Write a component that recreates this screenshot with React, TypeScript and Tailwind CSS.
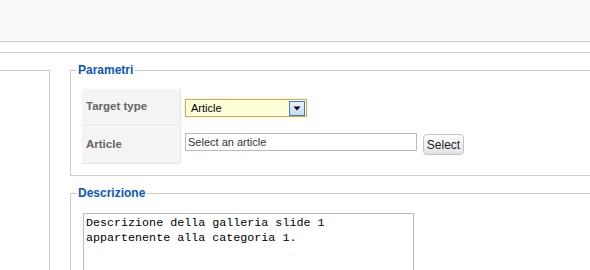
import React from "react";

export default function App() {
  return (
    <div className="w-[590px] h-[270px] overflow-hidden bg-white font-['Liberation_Sans',Arial,sans-serif]">
      <div className="h-[42px] bg-[#fafafa] border-b border-[#cccccc]" />
      <div className="h-[11px] border-b border-[#cccccc]" />
      <div className="flex items-start pt-[10px]">
        <div className="w-[50px] h-[300px] mt-[7px] border-t border-r border-[#cccccc] shrink-0" />
        <div className="ml-[20px] w-[600px] shrink-0">
          <fieldset className="border border-[#cccccc] px-[5px] pt-[11px] pb-[11px]">
            <legend className="px-[2px] h-[15px] leading-[15px] text-[12px] font-bold text-[#0b55c4]">Parametri</legend>
            <div className="ml-[6px] flex flex-col gap-[1px]">
              <div className="flex h-[37px]">
                <div className="w-[99px] h-[37px] bg-[#f4f4f4] border-b border-r border-[#e6e6e6] flex items-center pl-[4px] text-[11.5px] font-bold text-[#666666]">
                  Target type
                </div>
                <div className="pl-[4px] pt-[10px]">
                  <div className="w-[122px] h-[18px] border border-[#e5a53f] bg-[#ffffd8] shadow-[0_0_1px_#f5d48a] flex items-center justify-between">
                    <span className="pl-[5px] text-[11px] text-black leading-none">Article</span>
                    <div className="w-[16px] h-[15px] mr-[1px] border border-[#3d7bbd] bg-gradient-to-b from-[#e8f1fb] to-[#c6dcf2] flex items-center justify-center">
                      <svg width="8" height="5" viewBox="0 0 8 5">
                        <path d="M0.5 0.5 L7.5 0.5 L4 4.5 Z" fill="#000" />
                      </svg>
                    </div>
                  </div>
                </div>
              </div>
              <div className="flex h-[37px]">
                <div className="w-[99px] h-[37px] bg-[#f4f4f4] border-b border-r border-[#e6e6e6] flex items-center pl-[4px] text-[11.5px] font-bold text-[#666666]">
                  Article
                </div>
                <div className="pl-[4px] pt-[6px] flex items-start">
                  <div className="w-[232px] h-[18px] border border-[#bbbbbb] bg-white flex items-center pl-[2px] text-[11px] text-[#333333] leading-none">
                    Select an article
                  </div>
                  <div className="ml-[6px] mt-[1px] w-[41px] h-[21px] rounded-[4px] border border-[#c4c4c4] bg-gradient-to-b from-[#ffffff] to-[#e2e2e2] flex items-center justify-center text-[12px] text-[#222222]">
                    Select
                  </div>
                </div>
              </div>
            </div>
          </fieldset>
          <fieldset className="mt-[10px] border border-[#cccccc] px-[5px] pt-[12px] pb-[11px]">
            <legend className="px-[2px] h-[15px] leading-[15px] text-[12px] font-bold text-[#0b55c4]">Descrizione</legend>
            <textarea
              readOnly
              defaultValue={"Descrizione della galleria slide 1\nappartenente alla categoria 1."}
              className="ml-[7px] block w-[331px] h-[80px] resize-none border border-[#bbbbbb] px-[2px] pt-[2px] text-[11.7px] leading-[15px] text-black font-['Liberation_Mono','Courier_New',monospace] outline-none"
            />
          </fieldset>
        </div>
      </div>
    </div>
  );
}
